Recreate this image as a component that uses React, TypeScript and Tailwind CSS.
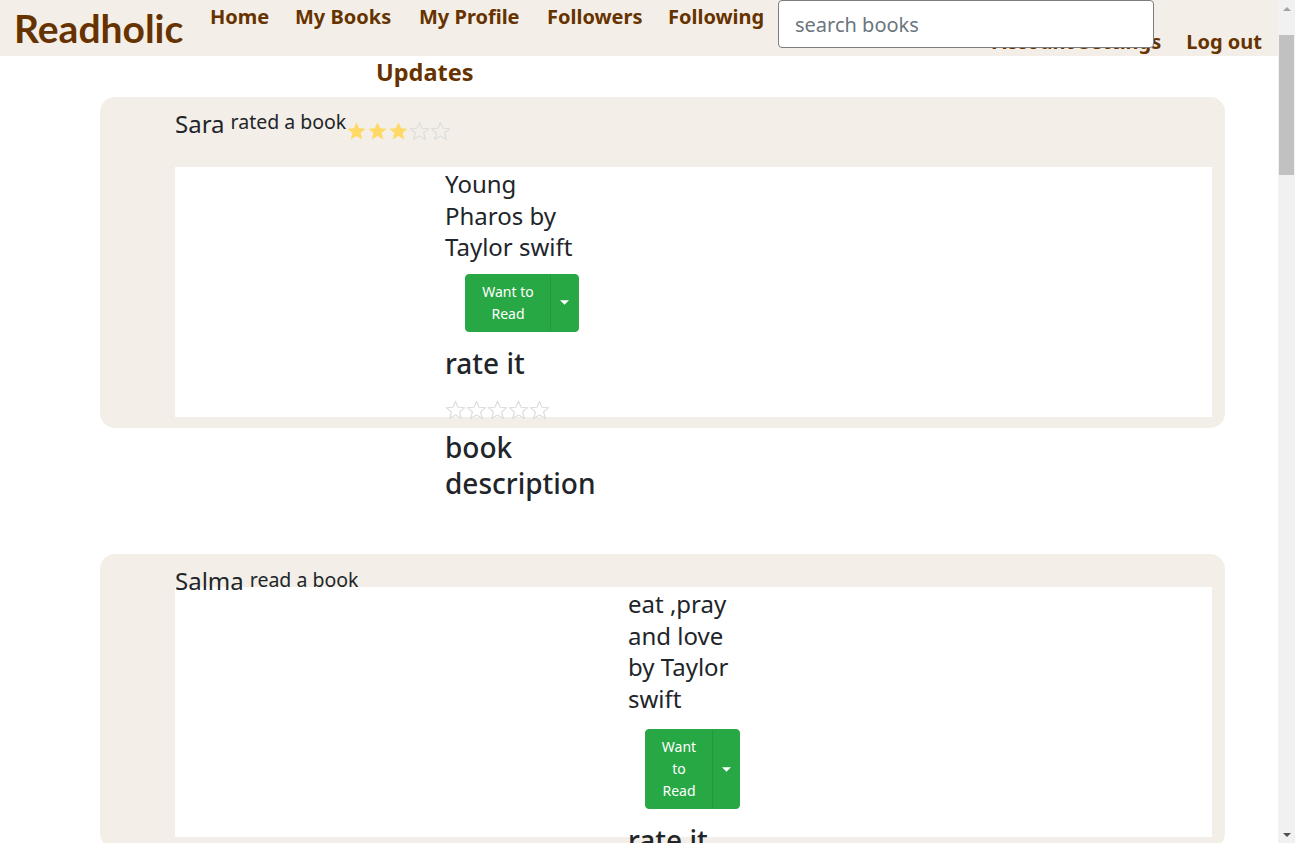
import React from "react";

const STAR = "10,1.2 12.6,7.3 19.2,7.7 14.1,12 15.8,18.5 10,14.9 4.2,18.5 5.9,12 0.8,7.7 7.4,7.3";

function Star({ filled }: { filled: boolean }) {
  return (
    <svg viewBox="0 0 20 20" className="w-[21px] h-[20px] shrink-0">
      {filled ? (
        <polygon points={STAR} fill="#ffd966" />
      ) : (
        <polygon points={STAR} fill="none" stroke="#dcdcdc" strokeWidth="1.1" strokeLinejoin="round" />
      )}
    </svg>
  );
}

function Stars({ n }: { n: number }) {
  return (
    <div className="flex">
      {[0, 1, 2, 3, 4].map((i) => (
        <Star key={i} filled={i < n} />
      ))}
    </div>
  );
}

type CardProps = {
  user: string;
  action: string;
  rating?: number;
  spacer: string;
  title: string[];
  btn: string[];
  btnMainW: string;
  btnCaretW: string;
  btnMt: string;
  btnMl: string;
  headerH: string;
  actionMt: string;
};

function Card(p: CardProps) {
  return (
    <div className="ml-[100px] w-[1125px] rounded-[15px] bg-[#f3efe8] pt-[11px] pl-[75px] pr-[13px] pb-[11px]">
      <div className={`relative z-10 flex items-start ${p.headerH}`}>
        <span className="text-[24px] leading-[32px] text-[#212529]">{p.user}</span>
        <span className={`ml-[6px] text-[19.5px] leading-[22px] text-[#212529] ${p.actionMt}`}>{p.action}</span>
        {p.rating !== undefined && (
          <div className="mt-[13px]">
            <Stars n={p.rating} />
          </div>
        )}
      </div>
      <div className="flex h-[250px] bg-white">
        <div className={`shrink-0 ${p.spacer}`} />
        <div className="pt-[1px] text-[#212529]">
          <div className="whitespace-nowrap text-[24px] leading-[31.6px]">
            {p.title.map((l, i) => (
              <div key={i}>{l}</div>
            ))}
          </div>
          <div className={`flex w-fit rounded-[4px] border border-[#28a745] bg-[#28a745] text-white ${p.btnMt} ${p.btnMl}`}>
            <div className={`py-[6px] text-center text-[14px] leading-[22px] ${p.btnMainW}`}>
              {p.btn.map((l, i) => (
                <div key={i}>{l}</div>
              ))}
            </div>
            <div className={`flex items-center justify-center border-l border-[#24963e] ${p.btnCaretW}`}>
              <svg viewBox="0 0 10 5" className="w-[9px] h-[5px]">
                <polygon points="0,0 10,0 5,5" fill="#ffffff" />
              </svg>
            </div>
          </div>
          <div className="mt-[13px] text-[28px] font-medium leading-[36px]">rate it</div>
          <div className="mt-[19px]">
            <Stars n={0} />
          </div>
          <div className="mt-[9px] whitespace-nowrap text-[28px] font-medium leading-[36px]">
            <div>book</div>
            <div>description</div>
          </div>
        </div>
      </div>
    </div>
  );
}

const card1: CardProps = {
  user: "Sara",
  action: "rated a book",
  rating: 3,
  spacer: "w-[270px]",
  title: ["Young", "Pharos by", "Taylor swift"],
  btn: ["Want to", "Read"],
  btnMainW: "w-[84px]",
  btnCaretW: "w-[28px]",
  btnMt: "mt-[11px]",
  btnMl: "ml-[20px]",
  headerH: "h-[59px]",
  actionMt: "mt-[3px]",
};

const card2: CardProps = {
  user: "Salma",
  action: "read a book",
  spacer: "w-[453px]",
  title: ["eat ,pray", "and love", "by Taylor", "swift"],
  btn: ["Want", "to", "Read"],
  btnMainW: "w-[66px]",
  btnCaretW: "w-[27px]",
  btnMt: "mt-[15px]",
  btnMl: "ml-[17px]",
  headerH: "h-[22px]",
  actionMt: "mt-[4px]",
};

export default function App() {
  const cards = [card1, card2, card1, card2, card1, card2, card1, card2, card1, card2];
  return (
    <div className="min-h-screen w-[1278px] bg-white font-['Noto_Sans',sans-serif]">
      <header className="relative flex h-[56px] bg-[#f3efe8]">
        <div className="w-[210px] shrink-0 pl-[14px] font-['Lato',sans-serif] text-[39px] font-bold leading-[56px] text-[#663300]">Readholic</div>
        <nav className="flex flex-1 flex-col pt-[4px] pr-[16px] text-[20px] font-bold leading-[25px] text-[#663300]">
          <div className="flex h-[25px] whitespace-nowrap">
            <a className="w-[85px]">Home</a>
            <a className="w-[124px]">My Books</a>
            <a className="w-[128px]">My Profile</a>
            <a className="w-[121px]">Followers</a>
            <a>Following</a>
          </div>
          <div className="flex h-[25px] justify-end gap-[25px] whitespace-nowrap">
            <a>Account Settings</a>
            <a>Log out</a>
          </div>
        </nav>
        <input
          placeholder="search books"
          className="absolute left-[778px] top-0 h-[48px] w-[376px] rounded-[4px] border border-[#7d7d7d] bg-white px-[16px] text-[20px] text-[#495057] outline-none placeholder:text-[#6c757d]"
        />
      </header>
      <main className="pb-[140px]">
        <h2 className="pl-[376px] pt-[2px] text-[23.5px] font-bold leading-[29px] text-[#663300]">Updates</h2>
        <div className="mt-[10px] flex flex-col gap-[126px]">
          {cards.map((c, i) => (
            <Card key={i} {...c} />
          ))}
        </div>
      </main>
      <div className="fixed right-0 top-0 flex h-screen w-[17px] flex-col items-center bg-[#f1f1f1]">
        <div className="flex h-[17px] w-full items-center justify-center">
          <svg viewBox="0 0 8 4" className="w-[8px] h-[4px]">
            <polygon points="0,4 8,4 4,0" fill="#a3a3a3" />
          </svg>
        </div>
        <div className="mt-[18px] h-[140px] w-[15px] bg-[#c1c1c1]" />
        <div className="flex-1" />
        <div className="flex h-[17px] w-full items-center justify-center">
          <svg viewBox="0 0 8 4" className="w-[8px] h-[4px]">
            <polygon points="0,0 8,0 4,4" fill="#505050" />
          </svg>
        </div>
      </div>
    </div>
  );
}
